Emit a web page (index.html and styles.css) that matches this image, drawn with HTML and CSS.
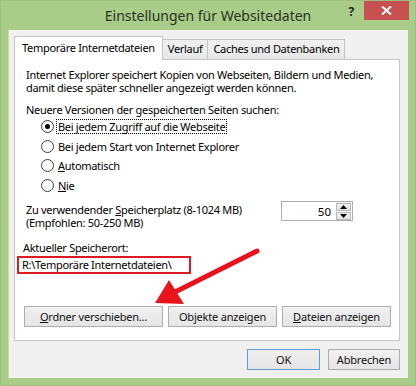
FILE: index.html
```html
<!DOCTYPE html>
<html lang="de">
<head>
<meta charset="utf-8">
<title>Einstellungen für Websitedaten</title>
<link rel="stylesheet" href="styles.css">
</head>
<body>
<div class="window">
  <div class="titlebar">
    <div></div>
    <div class="title">Einstellungen für Websitedaten</div>
    <div class="controls">
      <span class="help">?</span>
      <span class="close"><svg width="11" height="9" viewBox="0 0 11 9"><path d="M1 0.5 L10 8.5 M10 0.5 L1 8.5" stroke="#fff" stroke-width="2"/></svg></span>
    </div>
  </div>
  <div class="client">
    <div class="tabs">
      <div class="tab active">Temporäre Internetdateien</div>
      <div class="tab">Verlauf</div>
      <div class="tab">Caches und Datenbanken</div>
    </div>
    <div class="panel">
      <p class="intro">Internet Explorer speichert Kopien von Webseiten, Bildern und Medien,<br>damit diese später schneller angezeigt werden können.</p>
      <p class="label">Neuere Versionen der gespeicherten Seiten suchen:</p>
      <div class="radios">
        <div class="radio"><span class="circle checked"></span><span class="text focus">Bei jedem Zugriff auf die Webseite</span></div>
        <div class="radio"><span class="circle"></span><span class="text">Bei jedem Start von Internet Explorer</span></div>
        <div class="radio"><span class="circle"></span><span class="text"><u>A</u>utomatisch</span></div>
        <div class="radio"><span class="circle"></span><span class="text"><u>N</u>ie</span></div>
      </div>
      <div class="space-row">
        <div class="space-text">Zu verwendender <u>S</u>peicherplatz (8-1024 MB)<br>(Empfohlen: 50-250 MB)</div>
        <div class="spinner">
          <span class="value">50</span>
          <span class="arrows">
            <span class="spin up"><svg width="7" height="4" viewBox="0 0 7 4"><path d="M0 4 L3.5 0 L7 4 Z" fill="#000"/></svg></span>
            <span class="spin down"><svg width="7" height="4" viewBox="0 0 7 4"><path d="M0 0 L3.5 4 L7 0 Z" fill="#000"/></svg></span>
          </span>
        </div>
      </div>
      <div class="loc-label">Aktueller Speicherort:</div>
      <div class="path">R:\Temporäre Internetdateien\</div>
      <div class="btn-row">
        <button class="btn wide"><u>O</u>rdner verschieben...</button>
        <button class="btn">Ob<u>j</u>ekte anzeigen</button>
        <button class="btn"><u>D</u>ateien anzeigen</button>
      </div>
    </div>
    <div class="footer">
      <button class="btn ok">OK</button>
      <button class="btn cancel">Abbrechen</button>
    </div>
  </div>
  <svg class="arrow" width="416" height="386" viewBox="0 0 416 386">
    <line x1="257" y1="251" x2="175" y2="292" stroke="#e8141c" stroke-width="5" stroke-linecap="round"/>
    <polygon points="155,303 169,280 184,304" fill="#e8141c"/>
  </svg>
</div>
</body>
</html>
```
FILE: styles.css
```css
* { box-sizing: border-box; }
html, body { margin: 0; padding: 0; }
body {
  width: 416px;
  height: 386px;
  background: #a9cc88;
  font-family: "Noto Sans", "Liberation Sans", sans-serif;
  font-size: 11px;
  letter-spacing: -0.3px;
  color: #000;
  overflow: hidden;
}
.window {
  position: relative;
  width: 416px;
  height: 386px;
  display: flex;
  flex-direction: column;
  border: 1px solid #9dbf7e;
}
.titlebar {
  height: 29px;
  display: grid;
  grid-template-columns: 1fr auto 1fr;
  align-items: start;
}
.title {
  font-size: 14px;
  letter-spacing: 0;
  color: #2a3324;
  line-height: 29px;
}
.controls {
  justify-self: end;
  display: flex;
  align-items: flex-start;
  margin-right: 6px;
}
.help {
  font-weight: bold;
  font-size: 12px;
  line-height: 21px;
  color: #1e2a18;
  margin-right: 10px;
}
.close {
  width: 45px;
  height: 19px;
  background: #c75050;
  display: flex;
  align-items: center;
  justify-content: center;
}
.client {
  flex: 1;
  margin: 0 7px 7px 7px;
  background: #f0f0f0;
  border-left: 1px solid #c9d9bb;
  padding: 6px 8px 8px 5px;
  display: flex;
  flex-direction: column;
}
.tabs {
  display: flex;
  align-items: flex-end;
  height: 23px;
}
.tab {
  height: 20px;
  line-height: 18px;
  border: 1px solid #c4c4c4;
  border-bottom: none;
  background: linear-gradient(#f0f0f0, #e8e8e8);
  padding: 0 5px;
  margin-left: -1px;
  white-space: nowrap;
}
.tab.active {
  height: 24px;
  margin-bottom: -1px;
  margin-left: 0;
  background: #fff;
  padding: 0 7px;
  line-height: 22px;
  position: relative;
  z-index: 1;
}
.panel {
  background: #fff;
  border: 1px solid #c4c4c4;
  height: 282px;
  display: flex;
  flex-direction: column;
  padding: 8px 7px 0 0;
}
p { margin: 0; }
.intro {
  margin-left: 11px;
  line-height: 13px;
  white-space: nowrap;
}
.label {
  margin: 9px 0 0 11px;
  line-height: 13px;
}
.radios {
  margin-top: 1px;
}
.radio {
  height: 19.6px;
  display: flex;
  align-items: center;
  padding-left: 26px;
}
.circle {
  width: 13px;
  height: 13px;
  border: 1px solid #3c3c3c;
  border-radius: 50%;
  background: #fff;
  display: flex;
  align-items: center;
  justify-content: center;
  margin-right: 2px;
}
.circle.checked::after {
  content: "";
  width: 5px;
  height: 5px;
  border-radius: 50%;
  background: #000;
}
.text {
  padding: 0 1px;
  line-height: 13px;
  border: 1px solid transparent;
}
.text.focus {
  border: 1px dotted #000;
}
.space-row {
  display: flex;
  align-items: flex-start;
  margin-top: 6px;
}
.space-text {
  margin-left: 11px;
  padding-top: 2px;
  line-height: 13px;
}
.spinner {
  margin-left: auto;
  margin-right: 39px;
  width: 72px;
  height: 20px;
  border: 1px solid #abadb3;
  display: flex;
  align-items: center;
  justify-content: flex-end;
}
.value {
  margin-right: 5px;
  font-size: 11.5px;
  letter-spacing: 0;
}
.arrows {
  display: flex;
  flex-direction: column;
  gap: 1px;
  margin-right: 1px;
}
.spin {
  width: 15px;
  height: 8px;
  background: linear-gradient(#f2f2f2, #e2e2e2);
  border: 1px solid #b8b8b8;
  display: flex;
  align-items: center;
  justify-content: center;
}
.loc-label {
  margin: 12px 0 0 8px;
  line-height: 13px;
}
.path {
  margin: 2px 0 0 2px;
  width: 174px;
  height: 18px;
  border: 2px solid #dc1a22;
  padding-left: 3px;
  line-height: 14px;
}
.btn-row {
  display: flex;
  gap: 5px;
  margin-top: 32px;
  padding-left: 9px;
}
.btn {
  font-family: inherit;
  font-size: 11px;
  letter-spacing: -0.2px;
  color: #111;
  height: 21px;
  width: 109px;
  border: 1px solid #acacac;
  background: linear-gradient(#f0f0f0, #e5e5e5);
  padding: 0;
  line-height: 19px;
}
.btn.wide { width: 139px; }
.footer {
  display: flex;
  justify-content: flex-end;
  gap: 8px;
  margin-top: 8px;
}
.btn.ok {
  width: 73px;
  border-color: #5c9fdc;
}
.btn.cancel { width: 72px; }
.arrow {
  position: absolute;
  left: -1px;
  top: -1px;
  pointer-events: none;
}
```
